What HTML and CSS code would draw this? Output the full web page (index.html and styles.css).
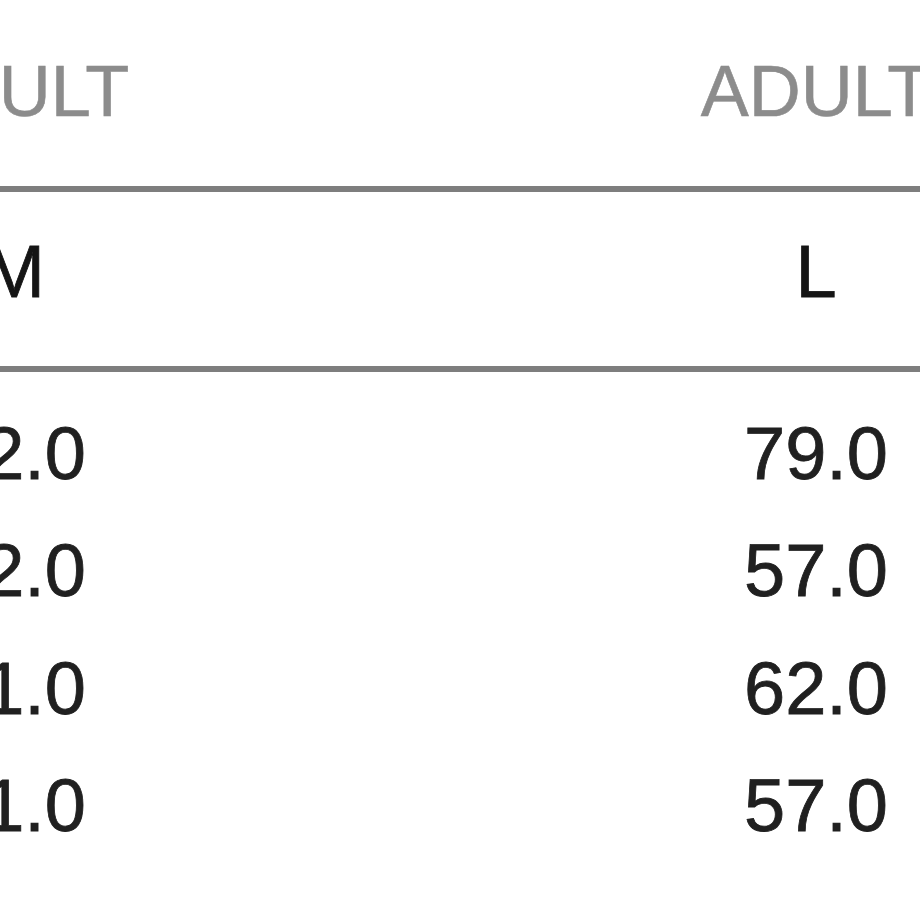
FILE: index.html
```html
<!DOCTYPE html>
<html lang="en">
<head>
<meta charset="utf-8">
<title>Size chart</title>
<link rel="stylesheet" href="styles.css">
</head>
<body>
<div class="viewport">
  <table class="size-table">
    <thead>
      <tr class="group-row">
        <th>ADULT</th>
        <th>ADULT</th>
      </tr>
      <tr class="size-row">
        <th>M</th>
        <th>L</th>
      </tr>
    </thead>
    <tbody>
      <tr class="first"><td>72.0</td><td>79.0</td></tr>
      <tr><td>52.0</td><td>57.0</td></tr>
      <tr><td>61.0</td><td>62.0</td></tr>
      <tr><td>51.0</td><td>57.0</td></tr>
    </tbody>
  </table>
</div>
</body>
</html>
```

FILE: styles.css
```css
html, body {
  margin: 0;
  padding: 0;
  background: #ffffff;
}

body {
  width: 920px;
  height: 920px;
  overflow: hidden;
  font-family: "Liberation Sans", Arial, Helvetica, sans-serif;
}

.viewport {
  width: 920px;
  height: 920px;
  overflow: hidden;
}

.size-table {
  border-collapse: collapse;
  table-layout: fixed;
  width: 1604px;
  margin-left: -387px;
}

.size-table th,
.size-table td {
  width: 802px;
  padding: 0;
  text-align: center;
  font-weight: normal;
}

.group-row th {
  font-size: 72px;
  line-height: 72px;
  color: #8c8c8c;
  padding-top: 55px;
  padding-bottom: 59px;
  border-bottom: 6px solid #7e7e7e;
  -webkit-text-stroke: 0.6px #8c8c8c;
}

.size-row th {
  font-size: 74px;
  line-height: 74px;
  color: #151515;
  padding-top: 43px;
  padding-bottom: 57px;
  border-bottom: 6px solid #7e7e7e;
  -webkit-text-stroke: 0.8px #151515;
}

.size-table td {
  font-size: 74px;
  line-height: 117.33px;
  color: #202020;
  -webkit-text-stroke: 0.8px #202020;
}

.size-table tr.first td {
  padding-top: 23px;
}
```
